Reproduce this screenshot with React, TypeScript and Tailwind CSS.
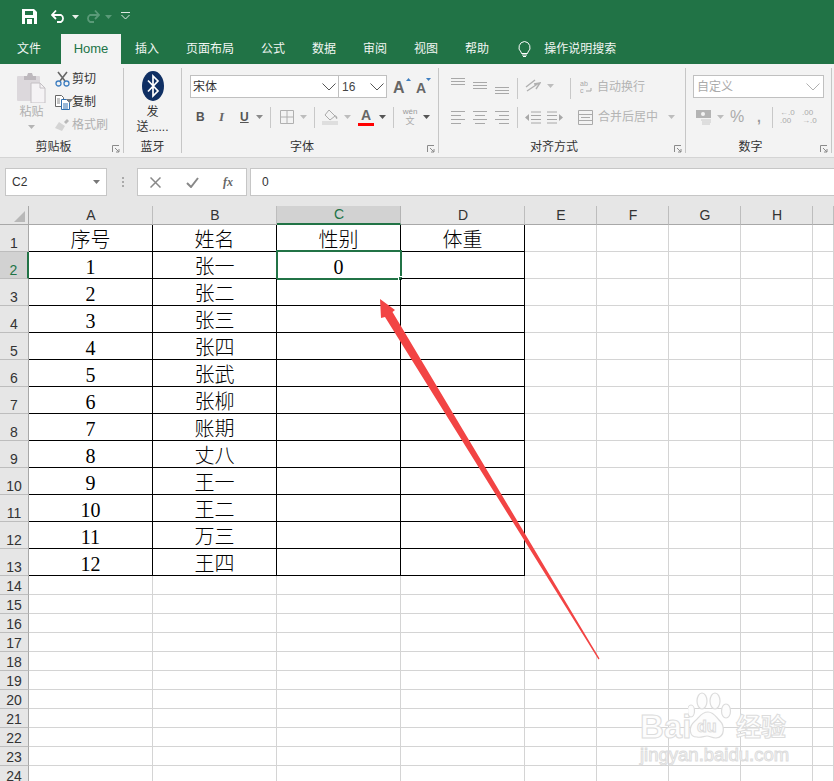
import React from "react";

const Caret = ({ c = "#8a8a8a", className = "" }: { c?: string; className?: string }) => (
  <svg width="7" height="4" viewBox="0 0 7 4" className={className}><path d="M0 0h7L3.5 4z" fill={c} /></svg>
);
const Chevron = ({ c = "#555" }: { c?: string }) => (
  <svg width="14" height="8" viewBox="0 0 14 8"><path d="M0.5 0.5L7 7L13.5 0.5" fill="none" stroke={c} strokeWidth="1" /></svg>
);
const Launcher = () => (
  <svg width="8" height="8" viewBox="0 0 8 8" className="absolute right-[3px] bottom-[0px]">
    <path d="M0.5 7V0.5H7M3 3l4 4M7 4v3H4" fill="none" stroke="#8a8a8a" strokeWidth="1" />
  </svg>
);
const Sep = ({ ml }: { ml: string }) => <div className={`${ml} h-[21px] w-px bg-[#c8c8c8]`} />;

const Lines = ({ rows }: { rows: [number, number, number][] }) => (
  <svg width="16" height="16" viewBox="0 0 16 16">
    {rows.map(([x, y, w], i) => (
      <rect key={i} x={x} y={y} width={w} height="1" fill="#a8a8a8" />
    ))}
  </svg>
);

function Group({ w, label, launcher, children }: { w: string; label: string; launcher?: boolean; children: React.ReactNode }) {
  return (
    <div className={`${w} relative mt-[4px] flex h-[85px] shrink-0 flex-col border-r border-[#c6c6c6]`}>
      <div className="h-[72px] shrink-0">{children}</div>
      <div className={`flex h-[13px] shrink-0 items-center justify-center text-[12px] leading-none text-[#333] ${launcher ? "pr-[16px]" : ""}`}>{label}</div>
      {launcher && <Launcher />}
    </div>
  );
}

const SmallBtn = ({ icon, text, c, mt }: { icon: React.ReactNode; text: string; c: string; mt: string }) => (
  <div className={`flex h-[20px] items-center ${mt}`}>
    <div className="flex w-[18px] justify-center">{icon}</div>
    <span className={`ml-[1px] text-[12px] leading-none ${c}`}>{text}</span>
  </div>
);

function Ribbon() {
  return (
    <div className="flex h-[94px] border-b border-[#d4d4d4] bg-[#f3f3f3]">
      <Group w="w-[124px]" label="剪贴板" launcher>
        <div className="flex">
          <div className="ml-[17px] mt-[4px] flex w-[29px] flex-col items-center">
            <svg width="29" height="31" viewBox="0 0 29 31">
              <rect x="0" y="4" width="23" height="25" rx="1" fill="#dcd8dc" />
              <path d="M7 4h3l1-3h4l1 3h3v4H7z" fill="#bdb8bd" />
              <path d="M14 11h9l5 5v15H14z" fill="#f5f3f5" stroke="#c4c0c4" />
              <path d="M23 11v5h5" fill="none" stroke="#c4c0c4" />
            </svg>
            <span className="mt-[1px] text-[12px] leading-[16px] text-[#b0b0b0]">粘贴</span>
            <Caret c="#b4b4b4" className="mt-[5px]" />
          </div>
          <div className="ml-[7px] mt-[1px] flex flex-col">
            <SmallBtn
              mt=""
              c="text-[#333]"
              text="剪切"
              icon={
                <svg width="15" height="16" viewBox="0 0 15 16">
                  <path d="M3 1l7 9M12 1L5 10" stroke="#666" strokeWidth="1.6" fill="none" />
                  <circle cx="3.5" cy="12.5" r="2.5" fill="none" stroke="#3f7fc1" strokeWidth="1.3" />
                  <circle cx="11.5" cy="12.5" r="2.5" fill="none" stroke="#3f7fc1" strokeWidth="1.3" />
                </svg>
              }
            />
            <SmallBtn
              mt="mt-[3px]"
              c="text-[#333]"
              text="复制"
              icon={
                <svg width="15" height="15" viewBox="0 0 15 15">
                  <path d="M0.5 0.5h6l2 2v9h-8z" fill="#fff" stroke="#666" />
                  <path d="M6.5 4.5h5l3 3v7h-8z" fill="#fff" stroke="#2f6fb0" />
                  <path d="M8 9h5M8 11h5M8 13h5" stroke="#2f6fb0" />
                  <path d="M2 4h3M2 6h3M2 8h3" stroke="#888" />
                </svg>
              }
            />
            <SmallBtn
              mt="mt-[3px]"
              c="text-[#b0b0b0]"
              text="格式刷"
              icon={
                <svg width="16" height="14" viewBox="0 0 16 14">
                  <path d="M10 4l3-3 2 2-3 3z" fill="#b8b8b8" />
                  <path d="M5 4l6 4-3 5-7-3z" fill="#d4d4d4" />
                </svg>
              }
            />
          </div>
          <Caret c="#7a7a7a" className="ml-[-42px] mt-[31px]" />
        </div>
      </Group>

      <Group w="w-[58px]" label="蓝牙">
        <div className="flex flex-col items-center pt-[3px]">
          <svg width="22" height="30" viewBox="0 0 22 30">
            <ellipse cx="11" cy="15" rx="11" ry="15" fill="#0f2f63" />
            <path d="M6 9.5L16 20l-5 5V5l5 5L6 20.5" fill="none" stroke="#fff" strokeWidth="1.7" />
          </svg>
          <span className="mt-[4px] text-[12px] leading-[15px] text-[#333]">发</span>
          <span className="text-[12px] leading-[15px] text-[#333]">送......</span>
        </div>
      </Group>

      <Group w="w-[257px]" label="字体" launcher>
        <div className="flex pl-[8px] pt-[7px]">
          <div className="flex h-[23px] w-[149px] items-center justify-between border border-[#c0c0c0] bg-white pl-[2px] pr-[2px] text-[12px] text-[#333]">
            <span>宋体</span>
            <Chevron />
          </div>
          <div className="flex h-[23px] w-[48px] items-center justify-between border border-l-0 border-[#c0c0c0] bg-white pl-[3px] pr-[2px] text-[12px] text-[#444]">
            <span>16</span>
            <Chevron />
          </div>
          <div className="relative ml-[6px] w-[17px] pt-[5px] text-[16px] font-bold leading-[16px] text-[#666]">
            A
            <svg width="5" height="3" viewBox="0 0 5 3" className="absolute right-[-1px] top-[3px]"><path d="M0 3h5L2.5 0z" fill="#3f7fc1" /></svg>
          </div>
          <div className="relative ml-[6px] w-[14px] pt-[6px] text-[14px] font-bold leading-[15px] text-[#666]">
            A
            <svg width="5" height="3" viewBox="0 0 5 3" className="absolute right-[-1px] top-[3px]"><path d="M0 0h5L2.5 3z" fill="#3f7fc1" /></svg>
          </div>
        </div>
        <div className="mt-[8px] flex h-[22px] items-center pl-[14px] pt-0">
          <span className="w-[9px] [font-family:'Liberation_Sans'] text-[12px] font-bold text-[#555]">B</span>
          <span className="ml-[14px] w-[8px] [font-family:'Liberation_Serif'] text-[13px] font-bold italic text-[#666]">I</span>
          <span className="ml-[13px] w-[10px] text-[12px] font-bold text-[#555] underline">U</span>
          <Caret className="ml-[6px]" />
          <Sep ml="ml-[7px]" />
          <svg width="14" height="14" viewBox="0 0 14 14" className="ml-[9px]"><path d="M.5.5h13v13H.5zM7 .5v13M.5 7h13" fill="none" stroke="#b0b0b0" /></svg>
          <Caret c="#bdbdbd" className="ml-[6px]" />
          <Sep ml="ml-[7px]" />
          <svg width="17" height="16" viewBox="0 0 17 16" className="ml-[7px]">
            <path d="M7 1l6 6-5 4-5-5z" fill="none" stroke="#aaa" />
            <path d="M13 6c2 1 3 3 2 4-1 0-2-2-2-4z" fill="#aaa" />
            <rect x="0" y="12" width="16" height="4" fill="#dedede" />
          </svg>
          <Caret c="#bdbdbd" className="ml-[5px]" />
          <div className="ml-[7px] flex w-[16px] flex-col items-center">
            <span className="text-[14px] font-bold leading-[13px] text-[#666]">A</span>
            <div className="mt-[1px] h-[3px] w-[16px] bg-[#f00]" />
          </div>
          <Caret c="#555" className="ml-[5px]" />
          <Sep ml="ml-[7px]" />
          <div className="ml-[8px] flex w-[16px] flex-col items-center">
            <span className="text-[8px] leading-[8px] text-[#999]">wén</span>
            <span className="text-[9px] leading-[10px] text-[#aaa]">文</span>
          </div>
          <Caret c="#555" className="ml-[5px]" />
        </div>
      </Group>

      <Group w="w-[247px]" label="对齐方式" launcher>
        <div className="flex h-[32px] items-start pl-[12px] pt-[10px]">
          <div className="flex w-[66px] items-start">
            <div className="w-[22px]"><Lines rows={[[0, 0, 14], [0, 3, 14], [0, 6, 14]]} /></div>
            <div className="w-[22px]"><Lines rows={[[0, 4, 14], [0, 7, 14], [0, 10, 14]]} /></div>
            <div className="w-[22px]"><Lines rows={[[0, 9, 14], [0, 12, 14], [0, 15, 14]]} /></div>
          </div>
          <Sep ml="ml-[0px]" />
          <svg width="16" height="15" viewBox="0 0 16 15" className="ml-[7px]">
            <path d="M1 9l9-7M2 13L14 5M11 11l4-6-6 1" fill="none" stroke="#b0b0b0" strokeWidth="1.4" />
          </svg>
          <Caret c="#bdbdbd" className="ml-[6px] mt-[6px]" />
          <Sep ml="ml-[16px]" />
          <svg width="13" height="15" viewBox="0 0 13 15" className="ml-[9px] mt-[1px]">
            <text x="0" y="7" fontSize="7" fill="#a8a8a8">ab</text>
            <text x="0" y="14" fontSize="7" fill="#a8a8a8">c</text>
            <path d="M6 12h5V9" fill="none" stroke="#a8a8a8" />
          </svg>
          <span className="ml-[4px] mt-[2px] text-[12px] leading-[15px] text-[#b4b4b4]">自动换行</span>
        </div>
        <div className="mt-[6px] flex h-[22px] items-center pl-[12px]">
          <div className="flex w-[66px]">
            <div className="w-[22px]"><Lines rows={[[0, 2, 14], [0, 6, 10], [0, 10, 14], [0, 14, 10]]} /></div>
            <div className="w-[22px]"><Lines rows={[[0, 2, 14], [2, 6, 10], [0, 10, 14], [2, 14, 10]]} /></div>
            <div className="w-[22px]"><Lines rows={[[0, 2, 14], [4, 6, 10], [0, 10, 14], [4, 14, 10]]} /></div>
          </div>
          <Sep ml="ml-[0px]" />
          <svg width="16" height="13" viewBox="0 0 16 13" className="ml-[7px]">
            <path d="M6 1h10M6 4.500h10M6 8.500h10M6 12h10" stroke="#a8a8a8" />
            <path d="M0 6.500L4 3v7z" fill="#a8a8a8" />
          </svg>
          <svg width="16" height="13" viewBox="0 0 16 13" className="ml-[6px]">
            <path d="M0 1h10M0 4.500h10M0 8.500h10M0 12h10" stroke="#a8a8a8" />
            <path d="M16 6.500L12 3v7z" fill="#a8a8a8" />
          </svg>
          <svg width="15" height="15" viewBox="0 0 15 15" className="ml-[15px]">
            <path d="M.5.5h14v14H.5zM.5 4.500h14M.5 10.500h14M3 7.500h9" fill="none" stroke="#aaa" />
          </svg>
          <span className="ml-[5px] text-[12px] leading-[15px] text-[#b4b4b4]">合并后居中</span>
          <Caret c="#bdbdbd" className="ml-[10px]" />
        </div>
      </Group>

      <Group w="w-[146px]" label="数字" launcher>
        <div className="ml-[7px] mt-[7px] flex h-[23px] w-[131px] items-center justify-between border border-[#c0c0c0] bg-white pl-[3px] pr-[3px] text-[12px] text-[#aaa]">
          <span>自定义</span>
          <Chevron c="#b0b0b0" />
        </div>
        <div className="mt-[8px] flex h-[22px] items-center pl-[10px]">
          <svg width="16" height="16" viewBox="0 0 16 16">
            <rect x="0" y="1" width="15" height="8" fill="#b4b4b4" />
            <circle cx="7" cy="5" r="2" fill="#f3f3f3" />
            <path d="M5 11h10M6 13h9M6 15h8" stroke="#c8c8c8" />
          </svg>
          <Caret c="#bdbdbd" className="ml-[5px]" />
          <span className="ml-[6px] w-[14px] text-[16px] leading-none text-[#aaa]">%</span>
          <span className="ml-[13px] w-[6px] text-[14px] font-bold leading-none text-[#999]">,</span>
          <Sep ml="ml-[9px]" />
          <div className="ml-[7px] flex w-[16px] flex-col text-[8px] leading-[8px] text-[#aaa]"><span>←.0</span><span>.00</span></div>
          <div className="ml-[6px] flex w-[16px] flex-col text-[8px] leading-[8px] text-[#aaa]"><span>.00</span><span>→.0</span></div>
        </div>
      </Group>
      <div className="flex-1" />
    </div>
  );
}

function FormulaBar() {
  return (
    <div className="flex h-[38px] bg-[#e6e6e6] pt-[10px]">
      <div className="ml-[5px] flex h-[28px] w-[102px] items-center justify-between border border-[#c6c6c6] bg-white px-[6px] text-[12px] text-[#333]">
        <span>C2</span>
        <Caret c="#777" />
      </div>
      <div className="ml-[14px] flex h-[28px] w-[4px] flex-col items-center justify-center gap-[2px]">
        <div className="h-[2px] w-[2px] bg-[#aaa]" />
        <div className="h-[2px] w-[2px] bg-[#aaa]" />
        <div className="h-[2px] w-[2px] bg-[#aaa]" />
      </div>
      <div className="ml-[12px] flex h-[28px] w-[110px] items-center border border-[#c6c6c6] bg-white">
        <svg width="11" height="11" viewBox="0 0 11 11" className="ml-[12px]"><path d="M.5.5l10 10M10.500.5l-10 10" stroke="#888" strokeWidth="1.500" /></svg>
        <svg width="13" height="11" viewBox="0 0 13 11" className="ml-[25px]"><path d="M1 6l4 4 7-9" fill="none" stroke="#888" strokeWidth="2" /></svg>
        <span className="ml-[24px] [font-family:'Liberation_Serif'] text-[12px] font-bold italic text-[#666]">fx</span>
      </div>
      <div className="ml-[3px] flex h-[28px] flex-1 items-center border-y border-l border-[#c6c6c6] bg-white pl-[11px] text-[12px] text-[#333]">0</div>
    </div>
  );
}

const COLS = ["A", "B", "C", "D", "E", "F", "G", "H", ""];
const DATA: [string, string, string, string][] = [
  ["序号", "姓名", "性别", "体重"],
  ["1", "张一", "0", ""],
  ["2", "张二", "", ""],
  ["3", "张三", "", ""],
  ["4", "张四", "", ""],
  ["5", "张武", "", ""],
  ["6", "张柳", "", ""],
  ["7", "账期", "", ""],
  ["8", "丈八", "", ""],
  ["9", "王一", "", ""],
  ["10", "王二", "", ""],
  ["11", "万三", "", ""],
  ["12", "王四", "", ""],
];

function Sheet() {
  const rows = Array.from({ length: 24 }, (_, i) => i + 1);
  return (
    <div className="grid auto-rows-min grid-cols-[29px_124px_124px_124px_124px_72px_72px_72px_72px_21px]">
      <div className="relative h-[19px] border-r border-b border-[#a8a8a8] bg-[#e6e6e6]">
        <svg width="11" height="11" viewBox="0 0 11 11" className="absolute bottom-[2px] right-[3px]"><path d="M11 0v11H0z" fill="#b8b8b8" /></svg>
      </div>
      {COLS.map((c, i) => (
        <div
          key={i}
          className={
            i === 2
              ? "flex h-[19px] items-center justify-center border-r border-b-2 border-r-[#b4b4b4] border-b-[#217346] bg-[#d2d2d2] pl-[1px] text-[14px] text-[#217346]"
              : "flex h-[19px] items-center justify-center border-r border-b border-r-[#bdbdbd] border-b-[#a8a8a8] bg-[#e6e6e6] pl-[1px] text-[14px] text-[#333]"
          }
        >
          {c}
        </div>
      ))}
      {rows.map((r) => {
        const d = DATA[r - 1];
        const inTable = r <= 13;
        const sel = r === 2;
        const h = inTable ? "h-[27px]" : "h-[19px]";
        return (
          <React.Fragment key={r}>
            <div
              className={
                sel
                  ? `${h} flex items-end justify-center border-r-2 border-b border-r-[#217346] border-b-[#bdbdbd] bg-[#d2d2d2] text-[14px] leading-[16px] text-[#217346]`
                  : `${h} flex items-end justify-center border-r border-b border-r-[#a8a8a8] border-b-[#bdbdbd] bg-[#e6e6e6] text-[14px] leading-[16px] text-[#333]`
              }
            >
              {r}
            </div>
            {COLS.map((_, i) => {
              const tbl = inTable && i < 4;
              const isSelected = sel && i === 2;
              return (
                <div
                  key={i}
                  className={`${h} relative flex items-center justify-center border-r border-b pt-[4px] ${
                    tbl ? "border-black" : "border-[#d4d4d4]"
                  } [font-family:'Liberation_Serif','Noto_Sans_CJK_SC',serif] text-[20px] font-light leading-none text-black`}
                >
                  {tbl ? d[i] : ""}
                  {isSelected && (
                    <div className="absolute left-[-1px] top-[-2px] h-[30px] w-[126px] border-2 border-[#217346]">
                      <div className="absolute bottom-[-3px] right-[-3px] h-[5px] w-[5px] border border-white bg-[#217346]" />
                    </div>
                  )}
                </div>
              );
            })}
          </React.Fragment>
        );
      })}
    </div>
  );
}

function Watermark() {
  const outline =
    "text-[#fdfdfd] [-webkit-text-stroke:1px_#dcdcdc] [font-family:'Liberation_Sans','Noto_Sans_CJK_SC',sans-serif] leading-none";
  return (
    <div className="pointer-events-none absolute left-[638px] top-[688px] h-[78px] w-[155px]">
      <span className={`absolute left-[2px] top-[22px] text-[33px] font-bold ${outline}`}>Bai</span>
      <svg width="46" height="50" viewBox="0 0 46 50" className="absolute left-[50px] top-[3px]">
        <g fill="#fdfdfd" stroke="#dcdcdc" strokeWidth="1.2">
          <ellipse cx="14" cy="10" rx="5" ry="8" />
          <ellipse cx="27" cy="10" rx="5" ry="8" />
          <ellipse cx="3" cy="20" rx="3.500" ry="6" />
          <ellipse cx="38" cy="20" rx="4.500" ry="7" />
          <path d="M20 21c6 0 8 5 12 9s6 16-4 17c-5 0-6-2-9-2s-6 2-10 1C1 46 0 36 7 30c4-3 6-9 13-9z" />
        </g>
      </svg>
      <span className={`absolute left-[59px] top-[31px] text-[16px] font-bold ${outline}`}>du</span>
      <span className={`absolute left-[98px] top-[27px] text-[25px] font-bold ${outline}`}>经验</span>
      <span className={`absolute left-[2px] top-[58px] text-[18.5px] ${outline}`}>jingyan.baidu.com</span>
    </div>
  );
}

export default function App() {
  const tabs: [string, string][] = [
    ["文件", "ml-[17px]"],
    ["插入", "ml-[14px]"],
    ["页面布局", "ml-[27px]"],
    ["公式", "ml-[27px]"],
    ["数据", "ml-[27px]"],
    ["审阅", "ml-[27px]"],
    ["视图", "ml-[27px]"],
    ["帮助", "ml-[27px]"],
  ];
  return (
    <div className="relative h-[781px] w-[834px] overflow-hidden bg-white [font-family:'Liberation_Sans','Noto_Sans_CJK_SC',sans-serif]">
      <div className="flex h-[34px] items-center bg-[#217346] pb-[2px]">
        <svg width="15" height="15" viewBox="0 0 15 15" className="ml-[22px]">
          <path d="M0 0h12l3 3v12H0z" fill="#fff" />
          <rect x="3" y="2" width="8" height="4" fill="#217346" />
          <rect x="3" y="9" width="9" height="6" fill="#217346" />
          <rect x="5" y="10" width="5" height="5" fill="#fff" />
        </svg>
        <svg width="15" height="14" viewBox="0 0 15 14" className="ml-[14px]">
          <path d="M1 6h9a4 4 0 0 1 0 7H6M5 1.500L1 6l4 4" fill="none" stroke="#fff" strokeWidth="1.800" />
        </svg>
        <Caret c="#e8f0ea" className="ml-[6px] mt-[2px]" />
        <svg width="15" height="14" viewBox="0 0 15 14" className="ml-[6px]">
          <path d="M14 6H5a4 4 0 0 0 0 7h4M10 1.500L14 6l-4 4" fill="none" stroke="#5a9a78" strokeWidth="1.800" />
        </svg>
        <Caret c="#5a9a78" className="ml-[5px] mt-[2px]" />
        <svg width="9" height="8" viewBox="0 0 9 8" className="ml-[9px]">
          <path d="M0 .5h9M.5 3l4 4 4-4" fill="none" stroke="#dfeae3" />
        </svg>
      </div>
      <div className="flex h-[30px] items-center bg-[#217346] text-[12px] text-[#f1f6f3]">
        <span className={tabs[0][1]}>文件</span>
        <div className="ml-[20px] flex h-[30px] w-[60px] items-center justify-center bg-[#f3f3f3] text-[13px] text-[#217346]">Home</div>
        {tabs.slice(1).map(([t, m]) => (
          <span key={t} className={m}>{t}</span>
        ))}
        <svg width="13" height="16" viewBox="0 0 13 16" className="ml-[29px]">
          <path d="M6.500.5a6 6 0 0 0-3.500 10.500l.5 1.500h6l.5-1.500A6 6 0 0 0 6.500.5zM4 14h5M5 15.500h3" fill="none" stroke="#fff" />
        </svg>
        <span className="ml-[13px]">操作说明搜索</span>
      </div>
      <Ribbon />
      <FormulaBar />
      <div className="h-[10px] bg-[#e6e6e6]" />
      <Sheet />
      <svg width="834" height="781" viewBox="0 0 834 781" className="pointer-events-none absolute left-0 top-0">
        <polygon points="380,299 395,310 392.500,312 599.500,658.500 598.500,659.500 385,317 381,318" fill="#f24444" />
      </svg>
      <Watermark />
    </div>
  );
}
